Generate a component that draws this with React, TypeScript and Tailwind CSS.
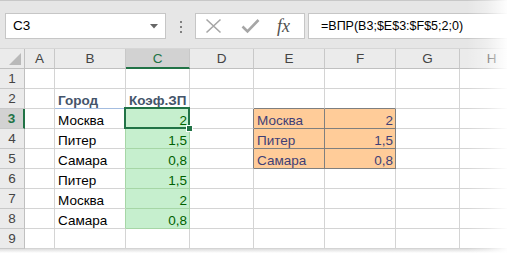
import React from "react";

type Kind = "plain" | "head" | "good" | "input";
type Cell = { text: string; kind: Kind; align?: "left" | "right" };

const COLS: { id: string; w: string }[] = [
  { id: "A", w: "w-[30px]" },
  { id: "B", w: "w-[71px]" },
  { id: "C", w: "w-[64px]" },
  { id: "D", w: "w-[64px]" },
  { id: "E", w: "w-[71px]" },
  { id: "F", w: "w-[71px]" },
  { id: "G", w: "w-[64px]" },
  { id: "H", w: "w-[64px]" },
];

const ROWS = [1, 2, 3, 4, 5, 6, 7, 8, 9];

const CELLS: Record<string, Cell> = {
  B2: { text: "Город", kind: "head" },
  C2: { text: "Коэф.ЗП", kind: "head" },
  B3: { text: "Москва", kind: "plain" },
  B4: { text: "Питер", kind: "plain" },
  B5: { text: "Самара", kind: "plain" },
  B6: { text: "Питер", kind: "plain" },
  B7: { text: "Москва", kind: "plain" },
  B8: { text: "Самара", kind: "plain" },
  C3: { text: "2", kind: "good", align: "right" },
  C4: { text: "1,5", kind: "good", align: "right" },
  C5: { text: "0,8", kind: "good", align: "right" },
  C6: { text: "1,5", kind: "good", align: "right" },
  C7: { text: "2", kind: "good", align: "right" },
  C8: { text: "0,8", kind: "good", align: "right" },
  E3: { text: "Москва", kind: "input" },
  F3: { text: "2", kind: "input", align: "right" },
  E4: { text: "Питер", kind: "input" },
  F4: { text: "1,5", kind: "input", align: "right" },
  E5: { text: "Самара", kind: "input" },
  F5: { text: "0,8", kind: "input", align: "right" },
};

const ACTIVE_COL = "C";
const ACTIVE_ROW = 3;

function kindAt(col: string, row: number): Kind | null {
  const c = CELLS[col + row];
  return c ? c.kind : null;
}

function nextCol(col: string): string {
  return String.fromCharCode(col.charCodeAt(0) + 1);
}

function rightBorder(col: string, row: number): string {
  const a = kindAt(col, row);
  const b = kindAt(nextCol(col), row);
  if (a === "input" || b === "input") return "border-r-[#7f7f7f]";
  if (a === "good" || b === "good") return "border-r-[#a6d6a6]";
  return "border-r-[#d4d4d4]";
}

function bottomBorder(col: string, row: number): string {
  const a = kindAt(col, row);
  const b = kindAt(col, row + 1);
  if (a === "input" || b === "input") return "border-b-[#7f7f7f]";
  if (a === "head") return "border-b-[#a4bde0]";
  if (a === "good" || b === "good") return "border-b-[#a6d6a6]";
  return "border-b-[#d4d4d4]";
}

function fill(kind: Kind | null): string {
  if (kind === "good") return "bg-[#c6efce] text-[#006100]";
  if (kind === "input") return "bg-[#ffcc99] text-[#3f3f76]";
  if (kind === "head") return "font-bold text-[#44546a]";
  return "text-black";
}

function GridCell({ col, row, w }: { col: string; row: number; w: string }) {
  const cell = CELLS[col + row];
  const isActive = col === ACTIVE_COL && row === ACTIVE_ROW;
  return (
    <div
      className={`relative h-[20px] shrink-0 border-r border-b ${w} ${rightBorder(col, row)} ${bottomBorder(
        col,
        row
      )} ${fill(cell ? cell.kind : null)}`}
    >
      {cell && (
        <div
          className={`whitespace-nowrap pt-[4px] text-[13.5px] leading-[15px] ${
            cell.align === "right" ? "pr-[2px] text-right" : "pl-[3px] text-left"
          }`}
        >
          {cell.text}
        </div>
      )}
      {isActive && (
        <div className="absolute -left-[2px] -top-[2px] -right-[1px] -bottom-[1px] z-10 border-2 border-[#217346]">
          <div className="absolute -right-[5px] -bottom-[5px] h-[7px] w-[7px] border border-white bg-[#217346]" />
        </div>
      )}
    </div>
  );
}

function FormulaBar() {
  return (
    <div className="flex h-[49px] items-start border-t border-[#c8c8c8] bg-[#e6e6e6] pt-[12px] border-b border-b-[#d6d6d6]">
      {/* name box */}
      <div className="ml-[5px] flex h-[26px] w-[161px] items-center justify-between border border-[#c6c6c6] bg-white pl-[7px] pr-[7px]">
        <span className="text-[13.5px] text-black">C3</span>
        <svg width="8" height="5" viewBox="0 0 8 5">
          <polygon points="0,0 8,0 4,4.5" fill="#666" />
        </svg>
      </div>
      {/* grip dots */}
      <div className="ml-[14px] mt-[8px] flex flex-col gap-[3px]">
        <div className="h-[2px] w-[2px] bg-[#808080]" />
        <div className="h-[2px] w-[2px] bg-[#808080]" />
        <div className="h-[2px] w-[2px] bg-[#808080]" />
      </div>
      {/* cancel / enter / function */}
      <div className="ml-[13px] flex h-[26px] w-[110px] items-center border border-[#c6c6c6] bg-white">
        <svg className="ml-[9px]" width="17" height="16" viewBox="0 0 17 16">
          <path d="M1.5 1.5 L15.5 14.5 M15.5 1.5 L1.5 14.5" stroke="#a6a6a6" strokeWidth="1.6" fill="none" />
        </svg>
        <svg className="ml-[19px]" width="19" height="16" viewBox="0 0 19 16">
          <path d="M1.5 8.5 L6.5 13.5 L17.5 2" stroke="#a6a6a6" strokeWidth="2.6" fill="none" />
        </svg>
        <span
          className="ml-[17px] text-[18px] italic leading-none text-[#505050]"
          style={{ fontFamily: '"Liberation Serif", serif' }}
        >
          fx
        </span>
      </div>
      {/* formula input */}
      <div className="ml-[3px] flex h-[26px] flex-1 items-center border border-r-0 border-[#c6c6c6] bg-white pl-[12px]">
        <span className="whitespace-nowrap text-[12.5px] text-black">=ВПР(B3;$E$3:$F$5;2;0)</span>
      </div>
    </div>
  );
}

function ColumnHeaders() {
  return (
    <div className="flex h-[20px]">
      <div className="relative h-[20px] w-[25px] shrink-0 border-r border-b border-[#c0c0c0] bg-[#ebebeb]">
        <svg className="absolute right-[3px] bottom-[3px]" width="12" height="12" viewBox="0 0 12 12">
          <polygon points="12,0 12,12 0,12" fill="#b9b9b9" />
        </svg>
      </div>
      {COLS.map((c) => {
        const active = c.id === ACTIVE_COL;
        return (
          <div
            key={c.id}
            className={`h-[20px] shrink-0 border-r border-[#c8c8c8] pt-[2px] text-center text-[13.5px] leading-[15px] ${c.w} ${
              active
                ? "border-b-2 border-b-[#217346] bg-[#d2d2d2] text-[#217346]"
                : "border-b border-b-[#c0c0c0] bg-[#ebebeb] text-[#444]"
            }`}
          >
            {c.id}
          </div>
        );
      })}
    </div>
  );
}

function Row({ row }: { row: number }) {
  const active = row === ACTIVE_ROW;
  return (
    <div className="flex h-[20px]">
      <div
        className={`h-[20px] w-[25px] shrink-0 border-b border-b-[#c8c8c8] pt-[2px] text-center text-[13.5px] leading-[15px] ${
          active
            ? "border-r-2 border-r-[#217346] bg-[#d2d2d2] font-bold text-[#217346]"
            : "border-r border-r-[#c0c0c0] bg-[#ebebeb] text-[#444]"
        }`}
      >
        {row}
      </div>
      {COLS.map((c) => (
        <GridCell key={c.id} col={c.id} row={row} w={c.w} />
      ))}
    </div>
  );
}

export default function App() {
  return (
    <div
      className="relative h-[253px] w-[507px] overflow-hidden bg-white text-[13px]"
      style={{ fontFamily: '"Liberation Sans", Arial, sans-serif' }}
    >
      <FormulaBar />
      <ColumnHeaders />
      {ROWS.map((r) => (
        <Row key={r} row={r} />
      ))}
      <div className="h-[4px] bg-linear-to-b from-[#dedede] to-white" />
      {/* soft fade along the right edge */}
      <div className="pointer-events-none absolute right-0 top-0 z-20 h-full w-[40px] bg-linear-to-r from-white/0 via-white/35 to-white/95" />
    </div>
  );
}
